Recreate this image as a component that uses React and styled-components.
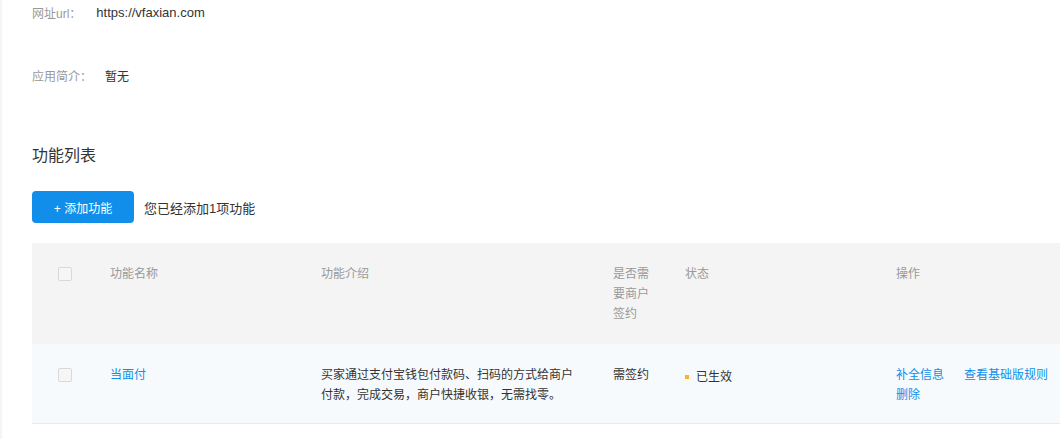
import React from "react";
import styled, { createGlobalStyle } from "styled-components";

const GlobalStyle = createGlobalStyle`
  html, body {
    margin: 0;
    padding: 0;
    background: #fff;
  }
  body {
    font-family: "Liberation Sans", "Noto Sans CJK SC", sans-serif;
    color: #333;
    font-size: 12px;
  }
`;

const features = [
  {
    id: 1,
    name: "当面付",
    intro: "买家通过支付宝钱包付款码、扫码的方式给商户付款，完成交易，商户快捷收银，无需找零。",
    sign: "需签约",
    status: "已生效",
  },
];

const App = () => {
  return (
    <>
      <GlobalStyle />
      <Page>
        <InfoBlock>
          <InfoRow>
            <Label gap={15}>网址url：</Label>
            <Value size={13}>https://vfaxian.com</Value>
          </InfoRow>
          <InfoRow>
            <Label gap={13}>应用简介：</Label>
            <Value size={12}>暂无</Value>
          </InfoRow>
        </InfoBlock>

        <Title>功能列表</Title>

        <Toolbar>
          <AddButton>+ 添加功能</AddButton>
          <Hint>您已经添加1项功能</Hint>
        </Toolbar>

        <Table>
          <HeadRow>
            <CheckCell>
              <Checkbox />
            </CheckCell>
            <Cell>功能名称</Cell>
            <Cell pr={40}>功能介绍</Cell>
            <Cell pr={30}>是否需要商户签约</Cell>
            <Cell>状态</Cell>
            <Cell>操作</Cell>
          </HeadRow>
          {features.map((f) => (
            <BodyRow key={f.id}>
              <CheckCell>
                <Checkbox />
              </CheckCell>
              <Cell>
                <Link>{f.name}</Link>
              </Cell>
              <Cell pr={40}>{f.intro}</Cell>
              <Cell pr={30}>{f.sign}</Cell>
              <Cell>
                <Status>
                  <Dot />
                  {f.status}
                </Status>
              </Cell>
              <Cell>
                <Actions>
                  <Link>补全信息</Link>
                  <Link>查看基础版规则</Link>
                  <Link>删除</Link>
                </Actions>
              </Cell>
            </BodyRow>
          ))}
        </Table>
      </Page>
    </>
  );
};

export default App;

const Page = styled.div`
  border-left: 2px solid #f5f5f5;
  padding-left: 30px;
  min-height: 439px;
  box-sizing: border-box;
  display: flex;
  flex-direction: column;
`;

const InfoBlock = styled.div`
  display: flex;
  flex-direction: column;
  gap: 39px;
`;

const InfoRow = styled.div`
  display: flex;
  align-items: center;
  height: 24px;
`;

const Label = styled.span`
  color: #999;
  font-size: 12px;
  margin-right: ${(p) => p.gap}px;
`;

const Value = styled.span`
  color: #333;
  font-size: ${(p) => p.size}px;
`;

const Title = styled.h2`
  margin: 57px 0 0;
  font-size: 16px;
  font-weight: normal;
  color: #333;
  line-height: 24px;
`;

const Toolbar = styled.div`
  display: flex;
  align-items: center;
  gap: 10px;
  margin-top: 23px;
`;

const AddButton = styled.button`
  width: 102px;
  height: 32px;
  border: none;
  border-radius: 4px;
  background: #108ee9;
  color: #fff;
  font-family: inherit;
  font-size: 12px;
  cursor: pointer;
`;

const Hint = styled.span`
  font-size: 13px;
  color: #333;
`;

const Table = styled.div`
  margin-top: 20px;
`;

const HeadRow = styled.div`
  display: grid;
  grid-template-columns: 78px 211px 292px 72px 211px 1fr;
  background: #f4f4f4;
  color: #999;
  padding: 21px 0 20px;
  line-height: 20px;
  min-height: 60px;
`;

const BodyRow = styled.div`
  display: grid;
  grid-template-columns: 78px 211px 292px 72px 211px 1fr;
  background: #f7fafd;
  color: #333;
  padding: 21px 0 18px;
  line-height: 20px;
  border-bottom: 1px solid #ebebeb;
`;

const Cell = styled.div`
  padding-right: ${(p) => p.pr || 0}px;
  font-size: 12px;
`;

const CheckCell = styled.div`
  padding-left: 26px;
  height: 20px;
  display: flex;
  align-items: center;
`;

const Checkbox = styled.span`
  display: block;
  width: 12px;
  height: 12px;
  border: 1px solid #d9d9d9;
  border-radius: 2px;
  background: #f6f6f6;
`;

const Link = styled.a`
  color: #108ee9;
  cursor: pointer;
  text-decoration: none;
`;

const Status = styled.span`
  display: inline-flex;
  align-items: center;
`;

const Dot = styled.i`
  display: inline-block;
  width: 4px;
  height: 4px;
  background: #fbb12a;
  margin: 0 7px 0 0;
`;

const Actions = styled.div`
  display: flex;
  flex-wrap: wrap;
  column-gap: 20px;
`;
